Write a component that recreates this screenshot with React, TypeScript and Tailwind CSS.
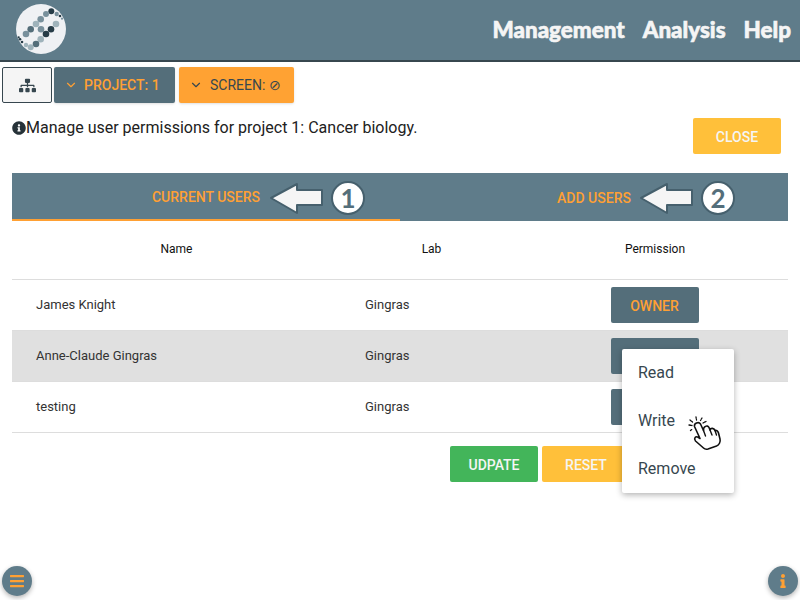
import { ChevronDown } from "lucide-react";
import { FaBars, FaInfo, FaInfoCircle, FaSitemap } from "react-icons/fa";

const dots = [
  [51.3, 11.3, 2.7, "#263c47"], [46, 14, 2.7, "#78909c"], [40.7, 19.3, 3, "#78909c"], [36, 24, 3, "#9fb3bb"],
  [30.7, 29.3, 3, "#546e7a"], [26, 34, 3, "#78909c"], [41, 29.3, 3, "#78909c"], [46, 34, 3, "#263c47"],
  [51, 29.3, 3, "#263c47"], [56, 24, 3, "#9fb3bb"], [40.7, 39.3, 3, "#9fb3bb"], [36, 44, 3, "#546e7a"],
  [30.7, 47.3, 2.7, "#9fb3bb"], [26, 45, 2, "#9fb3bb"], [22, 42, 1.2, "#263c47"], [20, 39.3, 1.2, "#263c47"],
  [18.7, 37.3, 1, "#263c47"], [56.7, 14, 2, "#78909c"], [60, 16, 1.2, "#263c47"], [62, 18.7, 1, "#78909c"],
] as const;

const users = [
  { name: "James Knight", permission: "OWNER" },
  { name: "Anne-Claude Gingras", permission: "WRITE" },
  { name: "testing", permission: "READ" },
];

function Logo() {
  return (
    <svg width="52" height="52" viewBox="15 3 52 52" className="ml-[15px] mt-[3px]">
      <circle cx="41" cy="29" r="25" fill="#eff1f4" />
      {dots.map(([cx, cy, r, fill]) => (
        <circle key={`${cx}-${cy}`} cx={cx} cy={cy} r={r * 1.1} fill={fill} />
      ))}
    </svg>
  );
}

function Callout({ number, left }: { number: string; left: string }) {
  return (
    <div className={`absolute top-[8px] flex items-center gap-[7px] ${left}`}>
      <svg width="54" height="32" viewBox="0 0 54 32">
        <path d="M1 16 L27 2 V8 H52 V23 H27 V31 Z" fill="#f5f5f5" stroke="#46606d" strokeWidth="2" strokeLinejoin="round" />
      </svg>
      <div className="flex h-[34px] w-[34px] items-center justify-center rounded-full border-2 border-[#46606d] bg-white text-[26px] font-bold leading-none text-[#546e7a] font-['Lato',sans-serif]">
        {number}
      </div>
    </div>
  );
}

function HandCursor() {
  return (
    <svg width="38" height="42" viewBox="0 0 38 42" className="absolute left-[65px] top-[67px]">
      <path
        d="M2 9L5 9.5M3 4L5.5 6M9 1L9.5 4M15 2L13.5 4.5M3.5 14.5L5.5 13M19 5.5L16 7"
        stroke="#111"
        strokeWidth="1.3"
        strokeLinecap="round"
        strokeDasharray="1.5 1"
        fill="none"
      />
      <path
        d="M7.5 10.5C6.8 7.5 11.5 5 13.5 8L16.5 14.5C16 10.5 20.5 8.5 22 11.5L23 14C23.5 11.8 27 11.8 28 14.5C29 13.8 31 15 31.5 17L33 23C33.8 26 32 29 29.5 30L21 33C19 33.6 17.5 33 16.5 32L8.5 25C6.5 22.5 8.5 19.5 11.5 21.5L13 22.5Z"
        fill="#fff"
        stroke="#111"
        strokeWidth="1.6"
        strokeLinejoin="round"
      />
      <path d="M16.5 14.5L18.5 20M23 14L25 19M28 14.5L29.5 19" stroke="#111" strokeWidth="1.4" strokeLinecap="round" fill="none" />
    </svg>
  );
}

export default function App() {
  return (
    <div className="relative h-[600px] w-[800px] overflow-hidden bg-white font-['Roboto',sans-serif] text-[#212121]">
      <header className="flex h-[62px] items-start justify-between border-b-2 border-[#37474f] bg-[#5f7c8a]">
        <Logo />
        <nav className="mr-[9px] mt-[15px] flex gap-[18px] text-[22.4px] font-black leading-[30px] text-[#f5f5f5] [-webkit-text-stroke:0.6px_#f5f5f5] font-['Lato',sans-serif]">
          <span>Management</span>
          <span>Analysis</span>
          <span>Help</span>
        </nav>
      </header>

      <div className="ml-[2px] mt-[5px] flex h-[36px] items-stretch gap-[2px] text-[14px] font-medium">
        <button className="flex w-[50px] items-center justify-center rounded-[2px] border border-[#37474f] bg-[#f5f5f5] text-[#37474f]">
          <FaSitemap size={17} />
        </button>
        <button className="flex w-[121px] items-center gap-[6px] rounded-[2px] bg-[#546e7a] pl-[10px] text-[#ffa033] shadow-sm">
          <ChevronDown size={14} />
          PROJECT: 1
        </button>
        <button className="ml-[2px] flex w-[115px] items-center gap-[7px] rounded-[2px] bg-[#ffa233] pl-[10px] font-normal text-[#37474f] shadow-sm">
          <ChevronDown size={14} />
          SCREEN: ⊘
        </button>
      </div>

      <div className="mx-[12px] mt-[15px] flex items-start justify-between pr-[7px]">
        <p className="flex items-center text-[16px] leading-[20px]">
          <FaInfoCircle size={14} className="text-[#263238]" />
          Manage user permissions for project 1: Cancer biology.
        </p>
        <button className="h-[36px] w-[88px] rounded-[2px] bg-[#ffc03a] pt-[2px] text-[14px] font-medium text-[#f5f5f5]">CLOSE</button>
      </div>

      <div className="relative mx-[12px] mt-[19px] grid h-[48px] grid-cols-2 bg-[#5f7c8a] text-[14px] font-medium text-[#ffa033]">
        <div className="flex items-center justify-center border-b-2 border-[#ffa033] pt-[2px]">CURRENT USERS</div>
        <div className="flex items-center justify-center pt-[2px]">ADD USERS</div>
        <Callout number="1" left="left-[258px]" />
        <Callout number="2" left="left-[628px]" />
      </div>

      <div className="mx-[12px] text-[13px]">
        <div className="grid h-[59px] grid-cols-[329px_180px_267px] items-center border-b border-[#dddddd] pb-[2px] text-[12px] text-[#111]">
          <div className="text-center">Name</div>
          <div className="pl-[1px] text-center">Lab</div>
          <div className="pl-[1px] text-center">Permission</div>
        </div>
        {users.map((user, i) => (
          <div
            key={user.name}
            className={`grid h-[51px] grid-cols-[329px_180px_267px] items-center border-b border-[#dddddd] ${i === 1 ? "bg-[#e0e0e0]" : ""}`}
          >
            <div className="pl-[24px] text-[#333]">{user.name}</div>
            <div className="pl-[24px] text-[#333]">Gingras</div>
            <div className="flex justify-center">
              {/* the open menu covers the labels of the last two rows */}
              <button className="h-[36px] w-[88px] rounded-[2px] bg-[#546e7a] pt-[2px] text-[14px] font-medium text-[#ffa033]">
                {i === 0 ? user.permission : ""}
              </button>
            </div>
          </div>
        ))}
      </div>

      <div className="ml-[450px] mt-[13px] flex gap-[4px] text-[14px] font-medium text-[#f5f5f5]">
        <button className="h-[36px] w-[88px] rounded-[2px] bg-[#43b55a] pt-[2px]">UDPATE</button>
        <button className="h-[36px] w-[88px] rounded-[2px] bg-[#ffc03a] pt-[2px]">RESET</button>
      </div>

      <div className="absolute left-[622px] top-[349px] flex h-[144px] w-[112px] flex-col rounded-[2px] bg-white text-[16px] text-[#37474f] shadow-[0_2px_6px_rgba(0,0,0,0.3)]">
        <div className="flex h-[48px] items-center pl-[16px]">Read</div>
        <div className="flex h-[48px] items-center pl-[16px]">Write</div>
        <div className="flex h-[48px] items-center pl-[16px]">Remove</div>
        <HandCursor />
      </div>

      <button className="absolute left-[2px] top-[566px] flex h-[30px] w-[30px] items-center justify-center rounded-full bg-[#5f7c8a] text-[#ffa033] shadow-[0_2px_5px_rgba(0,0,0,0.3)]">
        <FaBars size={16} />
      </button>
      <button className="absolute left-[768px] top-[566px] flex h-[30px] w-[30px] items-center justify-center rounded-full bg-[#5f7c8a] text-[#ffa033] shadow-[0_2px_5px_rgba(0,0,0,0.3)]">
        <FaInfo size={14} />
      </button>
    </div>
  );
}
